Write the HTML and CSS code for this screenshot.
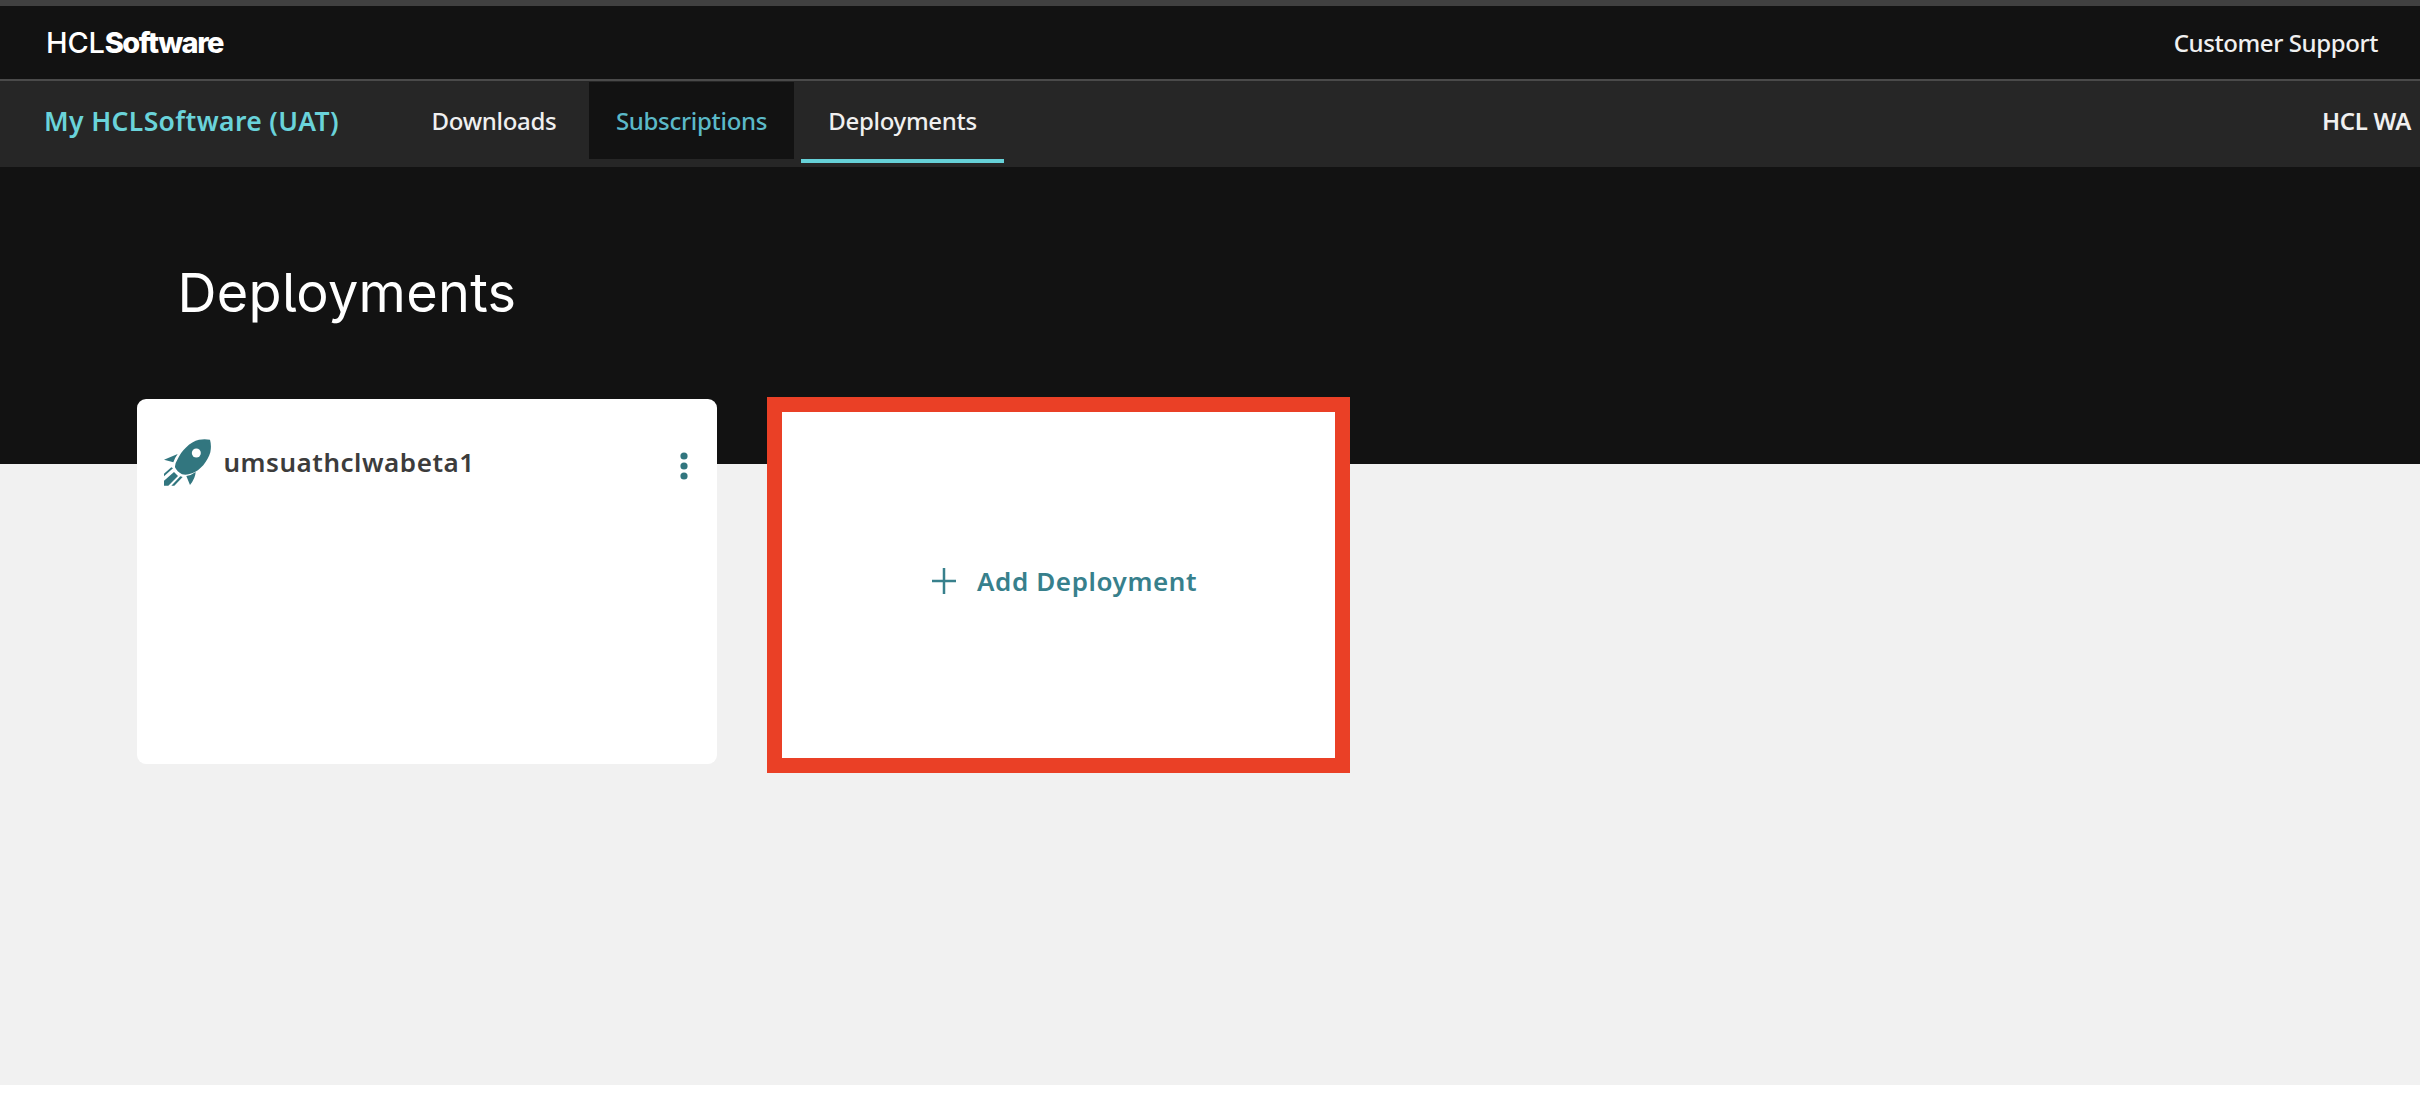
FILE: index.html
```html
<!DOCTYPE html>
<html lang="en">
<head>
<meta charset="utf-8">
<title>Deployments</title>
<link rel="stylesheet" href="styles.css">
</head>
<body>
<header class="topbar">
  <a class="logo"><span class="logo-thin">HCL</span><span class="logo-bold">Software</span></a>
  <a class="support">Customer Support</a>
</header>
<nav class="nav">
  <a class="brand">My HCLSoftware (UAT)</a>
  <div class="tabs">
    <a class="tab">Downloads</a>
    <a class="tab tab-hover">Subscriptions</a>
    <a class="tab tab-active">Deployments</a>
  </div>
  <a class="account">HCL WA</a>
</nav>
<main class="page">
  <h1 class="title">Deployments</h1>
  <div class="cards">
    <article class="card">
      <div class="card-head">
        <svg class="rocket" viewBox="0 0 141 141">
          <path d="M105 2Q122-1 138 2Q143 20 139 40C132 66 108 96 84 103Q68 110 54 106Q39 98 33 85Q32 74 40 62C52 35 78 8 105 2Z"/>
          <path d="M0 62L41 45Q32 57 28 70Z"/>
          <path d="M67 111Q82 109 95 99Q94 118 78 138Z"/>
          <path d="M0 112V104L22 85L27 88ZM0 125L30 99L42 111L13 140H0ZM22 140L49 112L56 114L31 140Z"/>
          <circle class="window" cx="97" cy="42" r="13.500"/>
        </svg>
        <h2 class="card-name">umsuathclwabeta1</h2>
        <svg class="dots" viewBox="0 0 8 28"><circle cx="4" cy="4" r="3.600"/><circle cx="4" cy="14" r="3.600"/><circle cx="4" cy="24" r="3.600"/></svg>
      </div>
    </article>
    <article class="card card-add">
      <svg class="plus" viewBox="0 0 26 26"><path d="M13 0V26M1 13H25"/></svg>
      <span class="add-label">Add Deployment</span>
      <div class="highlight"></div>
    </article>
  </div>
</main>
</body>
</html>
```
FILE: styles.css
```css
* { box-sizing: border-box; margin: 0; padding: 0; }

body {
  background: #fff;
  font-family: "Noto Sans", sans-serif;
  font-size: 24px;
  font-weight: 540;
  letter-spacing: -0.300px;
  color: #f0f0f0;
  white-space: nowrap;
}

.topbar {
  display: flex;
  align-items: center;
  justify-content: space-between;
  height: 81px;
  padding: 0 42px 0 46px;
  background: #121212;
  border-top: 6px solid #404040;
  border-bottom: 2px solid #4a4a4a;
}

.logo { font-family: Inter, sans-serif; font-size: 29px; color: #fff; }
.logo-thin { font-weight: 550; letter-spacing: -0.200px; }
.logo-bold { font-weight: 800; letter-spacing: -1.500px; }
.support { letter-spacing: -0.400px; }

.nav {
  display: flex;
  align-items: flex-start;
  height: 86px;
  padding: 1px 9px 0 44px;
  background: #262626;
}

.brand, .tab, .account { display: flex; align-items: center; height: 77px; }
.brand {
  width: 361px;
  font-size: 26.500px;
  font-weight: 600;
  letter-spacing: 0.370px;
  line-height: 34px;
  color: #6ad3da;
}
.account { font-weight: 600; letter-spacing: -0.300px; }
.tabs { display: flex; flex: 1; }
.tab { justify-content: center; }
.tab:first-child { width: 178px; margin-right: 6px; }
.tab-hover { width: 205px; margin-right: 7px; background: #121212; color: #5bb9c8; }
.tab-active { width: 203px; height: 81px; border-bottom: 4px solid #66d1d8; }

.page {
  height: 918px;
  padding-top: 94px;
  background: linear-gradient(#121212 296.500px, #f1f1f1 296.500px);
}

.title {
  margin-left: 177.500px;
  height: 64px;
  line-height: 64px;
  font-family: Inter, sans-serif;
  font-feature-settings: "cv05";
  font-size: 54px;
  font-weight: 430;
  letter-spacing: 0.300px;
  color: #fff;
}

.cards {
  display: grid;
  grid-template-columns: 580px 580px;
  gap: 53px;
  margin-top: 74px;
  padding-left: 137px;
}

.card { position: relative; height: 364.500px; background: #fff; border-radius: 9px; }
.card-head { display: flex; align-items: center; padding: 40px 29px 0 27px; }
.rocket { width: 47px; height: 47px; margin-right: 12.500px; fill: #32767f; }
.rocket .window { fill: #fff; }
.card-name {
  flex: 1;
  font-size: 26px;
  line-height: 47px;
  font-weight: 600;
  letter-spacing: 0.530px;
  color: #3c3c3c;
}
.dots { width: 8px; height: 28px; margin-top: 6px; fill: #32767f; }

.card-add { display: flex; align-items: center; padding-left: 160.500px; color: #37808c; }
.plus { width: 26px; height: 26px; margin-right: 20.500px; fill: none; stroke: currentColor; stroke-width: 2.500; }
.add-label { font-size: 26px; font-weight: 600; letter-spacing: 0.600px; }
.highlight { position: absolute; inset: -2px 0 -9.500px -3px; border: 15px solid #ea4026; }
```
